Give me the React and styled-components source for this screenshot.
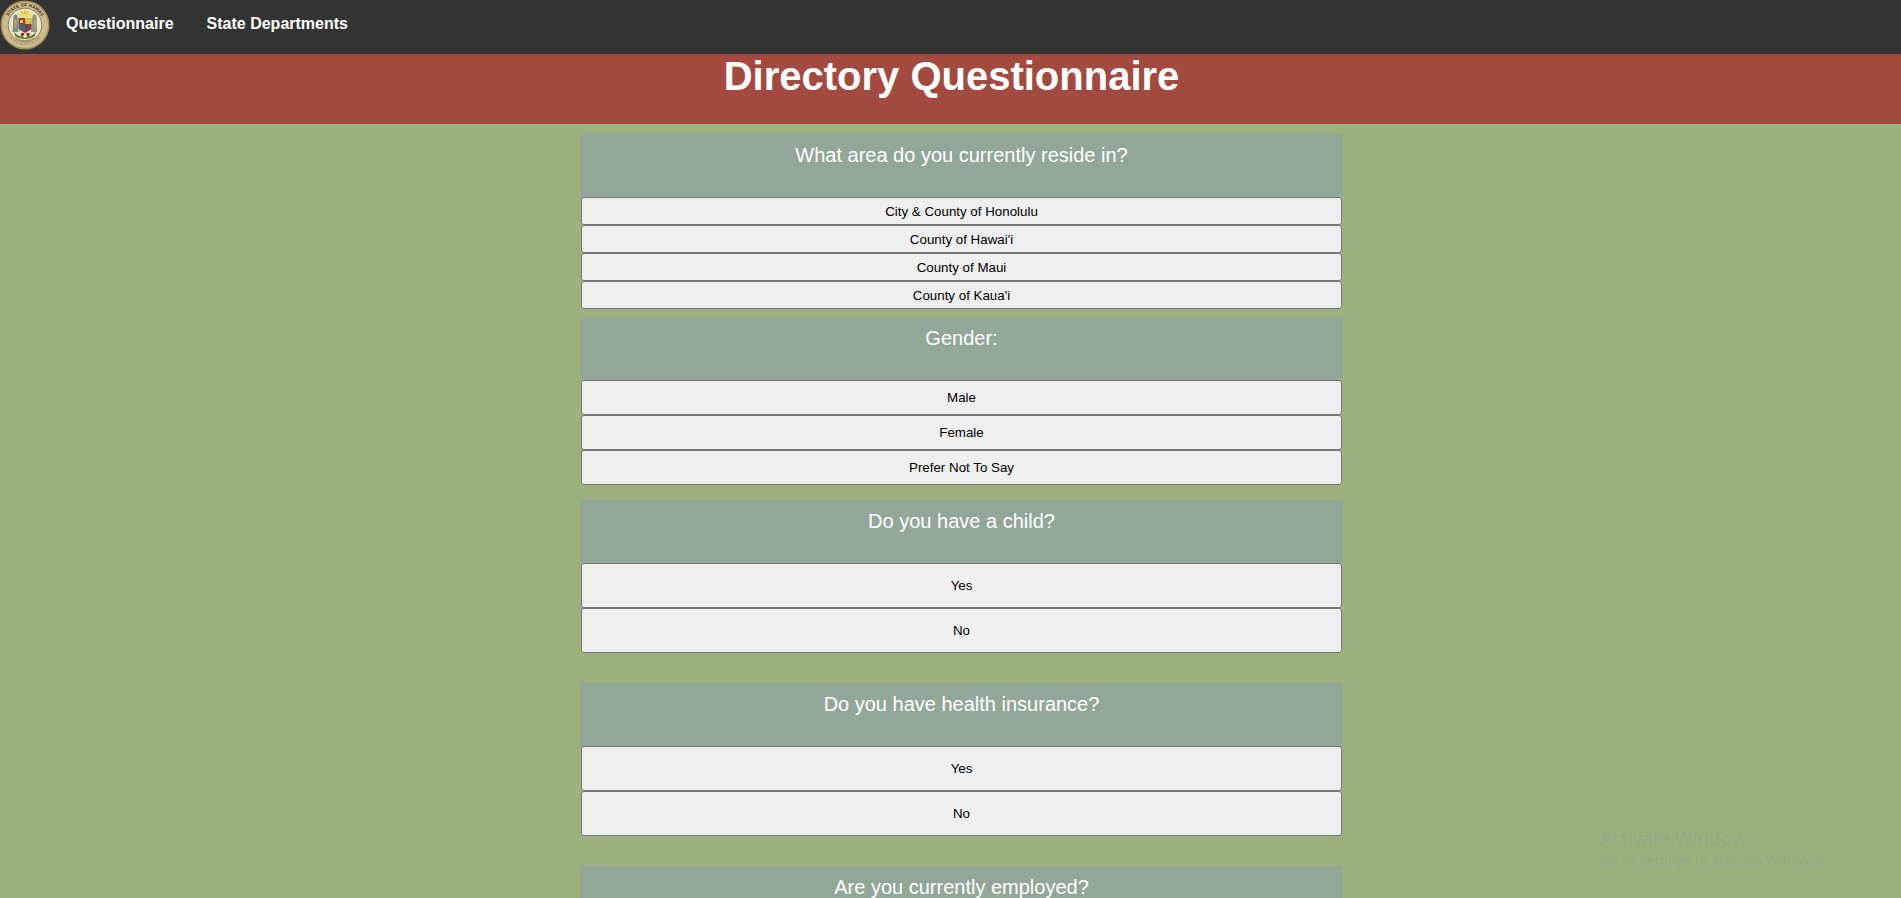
import React from "react";
import styled, { createGlobalStyle } from "styled-components";

const Global = createGlobalStyle`
  html, body { margin: 0; padding: 0; height: 898px; overflow: hidden; }
  body { background: #9db17f; font-family: "Liberation Sans", Arial, sans-serif; }
`;
const Nav = styled.nav`
  height: 54px; background: #333333; display: flex; align-items: flex-start;
`;
const Logo = styled.svg`
  width: 50px; height: 50px; flex: none;
`;
const NavLink = styled.a`
  color: #fff; font-weight: 700; font-size: 16px; margin-top: 15px; margin-left: ${p => p.$gap}px;
`;
const Banner = styled.header`
  height: 70px; background: #a34a40; text-align: center;
`;
const Title = styled.h1`
  margin: 0; color: #fff; font-size: 40px; line-height: 44px; font-weight: 700; padding-left: 2px;
`;
const Main = styled.main`
  width: 763px; margin: 10px 0 0 580px; display: flex; flex-direction: column; gap: 8px;
`;
const Card = styled.section`
  height: 175px; display: flex; flex-direction: column;
`;
const Question = styled.h2`
  margin: 0; height: 63px; flex: none; background: #92a798; color: #fff; font-size: 20px; font-weight: 400;
  text-align: center; line-height: 23px; padding-top: 10px; box-sizing: border-box;
`;
const Options = styled.div`
  flex: 0 0 auto; display: flex; flex-direction: column; padding: 0 1px;
`;
const Option = styled.button`
  height: ${p => p.$h}px; background: #efefef; border: 1px solid #767676; border-radius: 3px; color: #000;
  font-family: "Liberation Sans", Arial, sans-serif; font-size: 13.33px; padding: 0; width: 100%; display: block;
`;
const Watermark = styled.aside`
  position: fixed; left: 1600px; top: 826px; color: #98a788; font-family: "Open Sans", sans-serif; pointer-events: none;
`;
const WatermarkTitle = styled.div`
  font-size: 19px; line-height: 24px;
`;
const WatermarkSub = styled.div`
  font-size: 14px; line-height: 20px; margin-top: 1px;
`;

const questions = [
  { q: "What area do you currently reside in?", h: 28, o: ["City & County of Honolulu", "County of Hawai'i", "County of Maui", "County of Kaua'i"] },
  { q: "Gender:", h: 35, o: ["Male", "Female", "Prefer Not To Say"] },
  { q: "Do you have a child?", h: 45, o: ["Yes", "No"] },
  { q: "Do you have health insurance?", h: 45, o: ["Yes", "No"] },
  { q: "Are you currently employed?", h: 45, o: ["Yes", "No"] },
];

const Seal = () => (
  <Logo viewBox="0 0 50 50" aria-label="Seal of the State of Hawaii">
    <defs>
      <path id="sealTop" d="M6.500 25a18.500 18.500 0 0 1 37 0" />
      <path id="sealBottom" d="M5 25a20 20 0 0 0 40 0" />
    </defs>
    <circle cx="25" cy="25" r="24.500" fill="#a98a50" />
    <circle cx="25" cy="25" r="23" fill="#cdbb8c" />
    <text fontFamily="Liberation Sans, sans-serif" fontSize="4.600" fontWeight="700" fill="#3a3226" textAnchor="middle">
      <textPath href="#sealTop" startOffset="50%">STATE OF HAWAII</textPath>
    </text>
    <text fontFamily="Liberation Sans, sans-serif" fontSize="3" fill="#7d7a66" textAnchor="middle">
      <textPath href="#sealBottom" startOffset="50%">UA MAU KE EA O KA AINA</textPath>
    </text>
    <circle cx="25" cy="25" r="16.800" fill="#e9e4c8" stroke="#7e6c48" strokeWidth="0.800" />
    <path d="M19 14l6-3.500 6 3.500v3H19z" fill="#efdc62" />
    <path d="M25 10v4M21 11l2 3M29 11l-2 3" stroke="#b8912a" strokeWidth="0.700" />
    <path d="M13.500 16c1-2 3-2 4 0l1 16h-6z" fill="#7f8b80" />
    <path d="M32.500 16c1-2 3-2 4 0l.500 16h-6z" fill="#8d9480" />
    <path d="M14.500 20h2v8h-2zM33.500 20h2v8h-2z" fill="#b3a674" />
    <path d="M18.500 18h13v11l-6.500 4-6.500-4z" fill="#c9a22d" />
    <path d="M18.500 18h6.500v6h-6.500z" fill="#a8362d" />
    <path d="M25 24h6.500v5l-6.500 4z" fill="#7d3f58" />
    <path d="M25 18h6.500v6H25z" fill="#d8b838" />
    <path d="M18.500 24H25v9l-6.500-4z" fill="#4f6468" />
    <path d="M20 20h3v3h-3zM27 20h3v3h-3z" fill="#e3c95c" />
    <path d="M14 31c4 8 18 8 22 0l-1 5c-4 4-16 4-20 0z" fill="#5f7e36" />
    <path d="M21 33h3v3.500h-3zM26.500 33h3v3.500h-3z" fill="#a8201d" />
    <path d="M23.500 35h3v2.500h-3z" fill="#f4efe0" />
    <path d="M15 38c6 3.500 14 3.500 20 0" fill="none" stroke="#9a9a60" strokeWidth="1.400" />
  </Logo>
);

export default function App() {
  return (
    <>
      <Global />
      <Nav>
        <Seal />
        <NavLink $gap={16}>Questionnaire</NavLink>
        <NavLink $gap={33}>State Departments</NavLink>
      </Nav>
      <Banner><Title>Directory Questionnaire</Title></Banner>
      <Main>
        {questions.map(c => (
          <Card key={c.q}>
            <Question>{c.q}</Question>
            <Options>
              {c.o.map(o => <Option key={o} $h={c.h}>{o}</Option>)}
            </Options>
          </Card>
        ))}
      </Main>
      <Watermark>
        <WatermarkTitle>Activate Windows</WatermarkTitle>
        <WatermarkSub>Go to Settings to activate Windows.</WatermarkSub>
      </Watermark>
    </>
  );
}
